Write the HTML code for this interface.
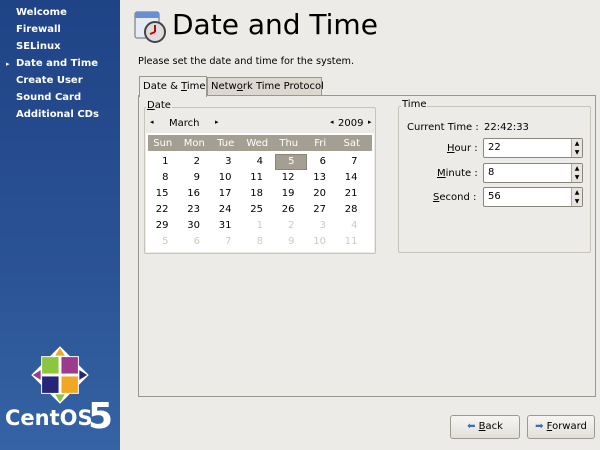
<!DOCTYPE html>
<html><head><style>
*{margin:0;padding:0;box-sizing:border-box}
body{width:600px;height:450px;overflow:hidden;background:#edebe7;font-family:"DejaVu Sans","Liberation Sans",sans-serif;font-size:10px;color:#000;position:relative;white-space:nowrap}
.a{position:absolute}
#side{left:0;top:0;width:120px;height:450px;background:linear-gradient(180deg,#1f4386 0%,#2a5395 60%,#3563a5 100%)}
#side div{position:absolute;left:16px;color:#fff;font-weight:bold;font-size:10px}
.cal td{width:31.5px;height:16px;text-align:right;padding-right:10px;font-size:10px}
.cal th{font-weight:normal;color:#fff;height:18px;font-size:10px;padding-bottom:2px}
.g{color:#cfcac2}
.spin{position:absolute;width:100px;height:20px;background:#fff;border:1px solid #8a877f;border-radius:2px;padding:3px 4px;font-size:10px}
.spin i{position:absolute;right:0;top:0;width:11px;height:18px;background:#e8e5e0;border-left:1px solid #aaa;font-style:normal;font-size:6px;line-height:9px;text-align:center}
.btn{position:absolute;height:24px;border:1px solid #9c998f;border-radius:3px;background:linear-gradient(#f6f5f3,#e3e0da);font-size:10px;text-align:center;line-height:22px}
</style></head><body>
<div id="side" class="a">
<div style="top:7px">Welcome</div>
<div style="top:24px">Firewall</div>
<div style="top:41px">SELinux</div>
<div style="top:58px">Date and Time</div>
<div style="left:6px;font-size:7px;top:60px">▸</div>
<div style="top:75px">Create User</div>
<div style="top:92px">Sound Card</div>
<div style="top:109px">Additional CDs</div>
<svg class="a" style="left:30px;top:345px" width="60" height="60" viewBox="0 0 62 62">
<g transform="rotate(45 31 31)"><rect x="10" y="10" width="42" height="42" fill="#fff"/></g>
<rect x="12" y="12" width="18" height="18" fill="#8cc63f" stroke="#fff"/>
<rect x="32" y="12" width="18" height="18" fill="#9c3a8d" stroke="#fff"/>
<rect x="12" y="32" width="18" height="18" fill="#262577" stroke="#fff"/>
<rect x="32" y="32" width="18" height="18" fill="#efa724" stroke="#fff"/>
<polygon points="31,3 26,11 36,11" fill="#efa724"/><polygon points="31,59 26,51 36,51" fill="#8cc63f"/>
<polygon points="3,31 11,26 11,36" fill="#9c3a8d"/><polygon points="59,31 51,26 51,36" fill="#262577"/>
</svg>
<div style="left:5px;top:406px;font-size:21px;font-weight:bold">CentOS</div>
<div style="left:88px;top:396px;font-size:36px;font-weight:bold">5</div>
</div>
<svg class="a" style="left:133px;top:10px" width="34" height="34" viewBox="0 0 34 34">
<rect x="2" y="2" width="24" height="26" rx="2" fill="#e6ecf5" stroke="#667"/>
<rect x="2" y="2" width="24" height="6" fill="#6a8fcf"/>
<circle cx="22" cy="22" r="10" fill="#ddd" stroke="#444" stroke-width="2"/>
<path d="M22 22 L22 15 M22 22 L17 24" stroke="#c00" stroke-width="2"/>
</svg>
<div class="a" style="left:172px;top:8px;font-size:28px">Date and Time</div>
<div class="a" style="left:138px;top:56px;font-size:9.7px">Please set the date and time for the system.</div>
<div class="a" style="left:138px;top:95px;width:458px;height:302px;border:1px solid #9a978e;background:#edebe7"></div>
<div class="a" style="left:139px;top:76px;width:68px;height:21px;border:1px solid #9a978e;border-bottom:none;background:#edebe7;padding:4px 3px">Date &amp; <u>T</u>ime</div>
<div class="a" style="left:207px;top:77px;width:115px;height:19px;border:1px solid #9a978e;background:#dcd8d0;padding:3px 3px">Netw<u>o</u>rk Time Protocol</div>
<div class="a" style="left:144px;top:107px;width:232px;height:147px;border:1px solid #c8c4bc;border-radius:2px"></div>
<div class="a" style="left:146px;top:100px;background:#edebe7;padding:0 1px"><u>D</u>ate</div>
<div class="a" style="left:146px;top:113px;width:228px;height:139px;background:#fff"></div>
<div class="a" style="left:146px;top:113px;width:228px;height:20px;background:#edebe7"></div>
<div class="a" style="left:150px;top:118px;font-size:7px">◂</div>
<div class="a" style="left:169px;top:118px">March</div>
<div class="a" style="left:215px;top:118px;font-size:7px">▸</div>
<div class="a" style="left:330px;top:118px;font-size:7px">◂</div>
<div class="a" style="left:338px;top:118px">2009</div>
<div class="a" style="left:368px;top:118px;font-size:7px">▸</div>
<div class="a" style="left:148px;top:135px;width:224px;height:16px;background:#a59e92"></div>
<div class="a" style="left:275px;top:154px;width:32px;height:16px;background:#a59e92;border:1px solid #8b857a"></div>
<table class="a cal" style="left:147px;top:135px;border-collapse:collapse">
<tr><th>Sun</th><th>Mon</th><th>Tue</th><th>Wed</th><th>Thu</th><th>Fri</th><th>Sat</th></tr>
<tr><td>1</td><td>2</td><td>3</td><td>4</td><td style="color:#fff">5</td><td>6</td><td>7</td></tr>
<tr><td>8</td><td>9</td><td>10</td><td>11</td><td>12</td><td>13</td><td>14</td></tr>
<tr><td>15</td><td>16</td><td>17</td><td>18</td><td>19</td><td>20</td><td>21</td></tr>
<tr><td>22</td><td>23</td><td>24</td><td>25</td><td>26</td><td>27</td><td>28</td></tr>
<tr><td>29</td><td>30</td><td>31</td><td class="g">1</td><td class="g">2</td><td class="g">3</td><td class="g">4</td></tr>
<tr><td class="g">5</td><td class="g">6</td><td class="g">7</td><td class="g">8</td><td class="g">9</td><td class="g">10</td><td class="g">11</td></tr>
</table>
<div class="a" style="left:398px;top:106px;width:193px;height:147px;border:1px solid #c8c4bc;border-radius:2px"></div>
<div class="a" style="left:401px;top:99px;background:#edebe7;padding:0 1px">Time</div>
<div class="a" style="left:407px;top:122px">Current Time :</div>
<div class="a" style="left:484px;top:122px">22:42:33</div>
<div class="a" style="left:447px;top:143px"><u>H</u>our :</div>
<div class="a" style="left:437px;top:168px"><u>M</u>inute :</div>
<div class="a" style="left:433px;top:192px"><u>S</u>econd :</div>
<div class="spin" style="left:483px;top:138px">22<i>▲<br>▼</i></div>
<div class="spin" style="left:483px;top:163px">8<i>▲<br>▼</i></div>
<div class="spin" style="left:483px;top:187px">56<i>▲<br>▼</i></div>
<div class="btn" style="left:450px;top:415px;width:70px"><span style="color:#3b6db0">⬅</span> <u>B</u>ack</div>
<div class="btn" style="left:527px;top:415px;width:68px"><span style="color:#3b6db0">➡</span> <u>F</u>orward</div>
</body></html>
